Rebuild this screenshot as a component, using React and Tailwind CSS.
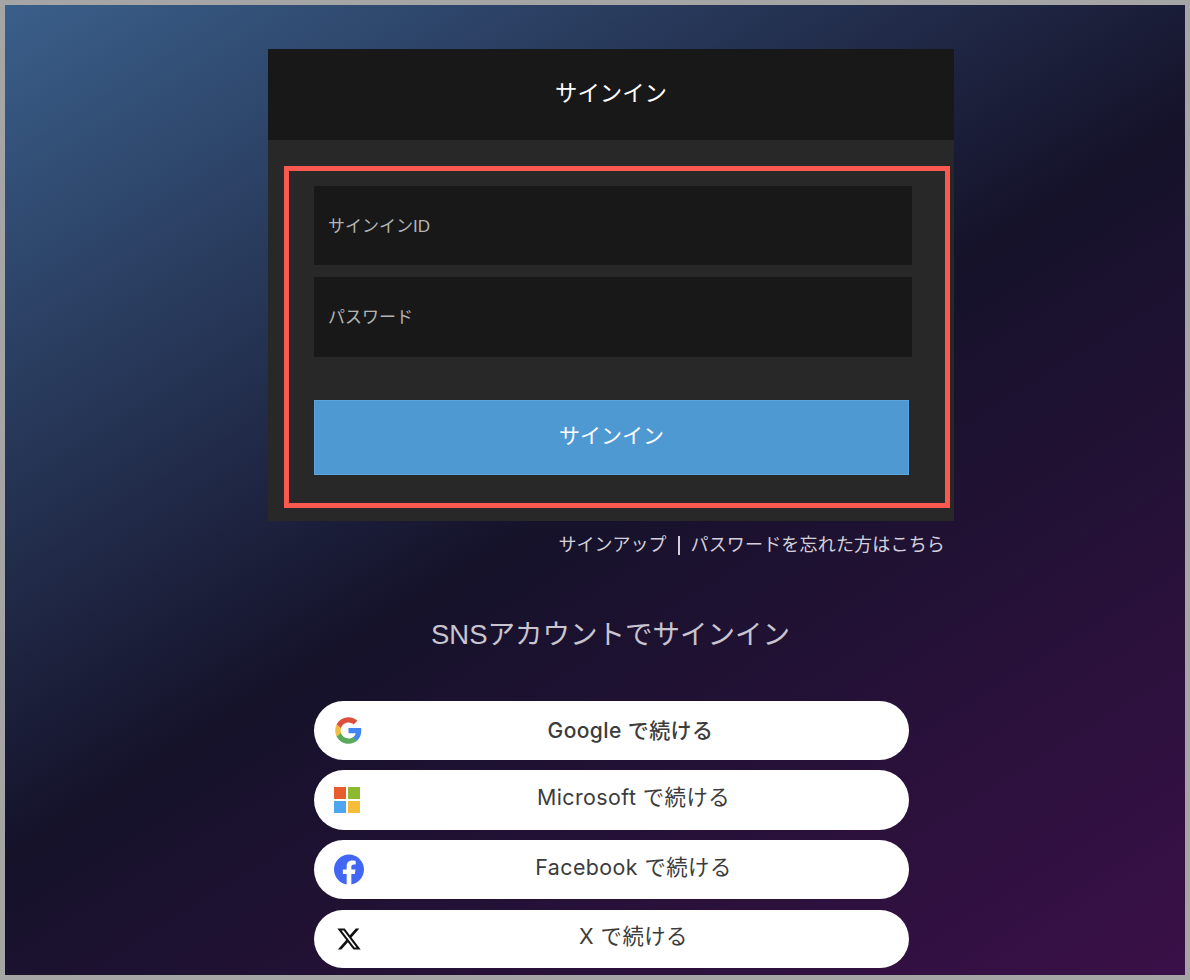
import React from 'react';

const GoogleIcon = () => (
  <svg width="29" height="29" viewBox="0 0 24 24">
    <path fill="#4285F4" d="M22.56 12.25c0-.78-.07-1.53-.2-2.25H12v4.26h5.92c-.26 1.37-1.04 2.53-2.21 3.31v2.77h3.57c2.08-1.92 3.28-4.74 3.28-8.09z" />
    <path fill="#5AAA5E" d="M12 23c2.97 0 5.46-.98 7.28-2.66l-3.57-2.77c-.98.66-2.23 1.06-3.71 1.06-2.86 0-5.29-1.93-6.16-4.53H2.18v2.84C3.99 20.53 7.7 23 12 23z" />
    <path fill="#F2BE42" d="M5.84 14.09c-.22-.66-.35-1.36-.35-2.09s.13-1.43.35-2.09V7.07H2.18C1.43 8.55 1 10.22 1 12s.43 3.45 1.18 4.93l3.66-2.84z" />
    <path fill="#DD4F3C" d="M12 5.38c1.62 0 3.06.56 4.21 1.64l3.15-3.15C17.45 2.09 14.97 1 12 1 7.7 1 3.99 3.47 2.18 7.07l3.66 2.84c.87-2.6 3.3-4.53 6.16-4.53z" />
  </svg>
);

const MicrosoftIcon = () => (
  <svg width="26" height="26" viewBox="0 0 26 26">
    <rect x="0" y="0" width="12" height="12" fill="#E65C2E" />
    <rect x="14" y="0" width="12" height="12" fill="#8DB92E" />
    <rect x="0" y="14" width="12" height="12" fill="#4FA6EE" />
    <rect x="14" y="14" width="12" height="12" fill="#F6BC3C" />
  </svg>
);

const FacebookIcon = () => (
  <svg width="31" height="31" viewBox="0 0 24 24">
    <path fill="#4267F5" d="M24 12.073C24 5.405 18.627 0 12 0S0 5.405 0 12.073c0 6.026 4.388 11.02 10.125 11.927v-8.437H7.078v-3.49h3.047V9.413c0-3.026 1.792-4.697 4.533-4.697 1.312 0 2.686.236 2.686.236v2.971h-1.513c-1.491 0-1.956.93-1.956 1.886v2.264h3.328l-.532 3.49h-2.796V24C19.612 23.093 24 18.099 24 12.073z" />
  </svg>
);

const XIcon = () => (
  <svg width="26" height="26" viewBox="0 0 24 24">
    <path fill="#111111" d="M18.244 2.25h3.308l-7.227 8.26 8.502 11.24H16.17l-5.214-6.817L4.99 21.75H1.68l7.73-8.835L1.254 2.25H8.08l4.713 6.231zm-1.161 17.52h1.833L7.084 4.126H5.117z" />
  </svg>
);

const socials = [
  { name: 'Google', icon: <GoogleIcon />, className: 'h-[59px] font-medium pr-[12px] text-[21px]', iconClass: 'pl-0', textClass: '' },
  { name: 'Microsoft', icon: <MicrosoftIcon />, className: 'h-[60px] pr-[6px] text-[21.4px]', iconClass: 'pl-0', textClass: 'pb-[5px]' },
  { name: 'Facebook', icon: <FacebookIcon />, className: 'h-[59px] pr-[6px] text-[21.4px]', iconClass: 'pl-0', textClass: 'pb-[4px]' },
  { name: 'X', icon: <XIcon />, className: 'mt-px h-[58px] pr-[6px] text-[21.4px]', iconClass: 'pl-[2px]', textClass: 'pb-[5px]' },
];

const SocialButton = ({ name, icon, className, iconClass, textClass }) => (
  <button className={`flex w-[595px] items-center rounded-[30px] bg-white pl-5 font-['Inter','Noto_Sans_CJK_JP',sans-serif] tracking-[0.02em] text-[#3c3c3c] ${className}`}>
    <span className={`flex w-[30px] shrink-0 items-center justify-start ${iconClass}`}>{icon}</span>
    <span className={`flex-1 text-center ${textClass}`}>{name} で続ける</span>
  </button>
);

const Field = ({ label, className }) => (
  <div className={`flex w-[598px] items-center bg-[#181818] pl-[14px] pt-[2px] text-[17px] text-[#b4b4b4] ${className}`}>
    {label}
  </div>
);

export default function App() {
  return (
    <div className="h-[980px] w-[1190px] overflow-hidden border-[5px] border-[#a5a5a5] bg-[linear-gradient(148deg,#3a5f8a_0%,#15122a_50%,#3a1048_100%)]">
      <div className="h-full font-['Liberation_Sans','Noto_Sans_CJK_JP',sans-serif]">
        <div className="ml-[263px] w-[686px] pt-[44px]">
          <div className="flex h-[91px] items-center justify-center bg-[#181818] pb-px text-[22.4px] text-white">
            サインイン
          </div>
          <div className="h-[381px] bg-[#282828] pl-[16px] pr-[4px] pt-[26px]">
            <div className="h-[342px] border-[5px] border-[#fb5850] pl-[25px] pt-[15px]">
              <div className="flex flex-col gap-[12px]">
                <Field label="サインインID" className="h-[79px]" />
                <Field label="パスワード" className="h-[80px]" />
              </div>
              <button className="mt-[43px] flex h-[75px] w-[595px] items-center justify-center border border-[#5aa5dc] bg-[#4f99d3] pb-[4px] text-[21px] text-white">
                サインイン
              </button>
            </div>
          </div>
          <p className="mt-[12px] flex items-center justify-end pr-[9px] text-[18px] leading-[24px] text-[#d4d0da]">
            <span>サインアップ</span>
            <span className="ml-[12px] mr-[10px] h-[19px] w-[2px] bg-[#d4d0da]" />
            <span className="tracking-[0.01em]">パスワードを忘れた方はこちら</span>
          </p>
        </div>
        <h2 className="mt-[58px] pl-[31px] text-center text-[27.5px] leading-[40px] text-[#c8c4d0]">
          SNSアカウントでサインイン
        </h2>
        <div className="ml-[309px] mt-[46px] flex flex-col gap-[10px]">
          {socials.map((s) => (
            <SocialButton key={s.name} {...s} />
          ))}
        </div>
      </div>
    </div>
  );
}
